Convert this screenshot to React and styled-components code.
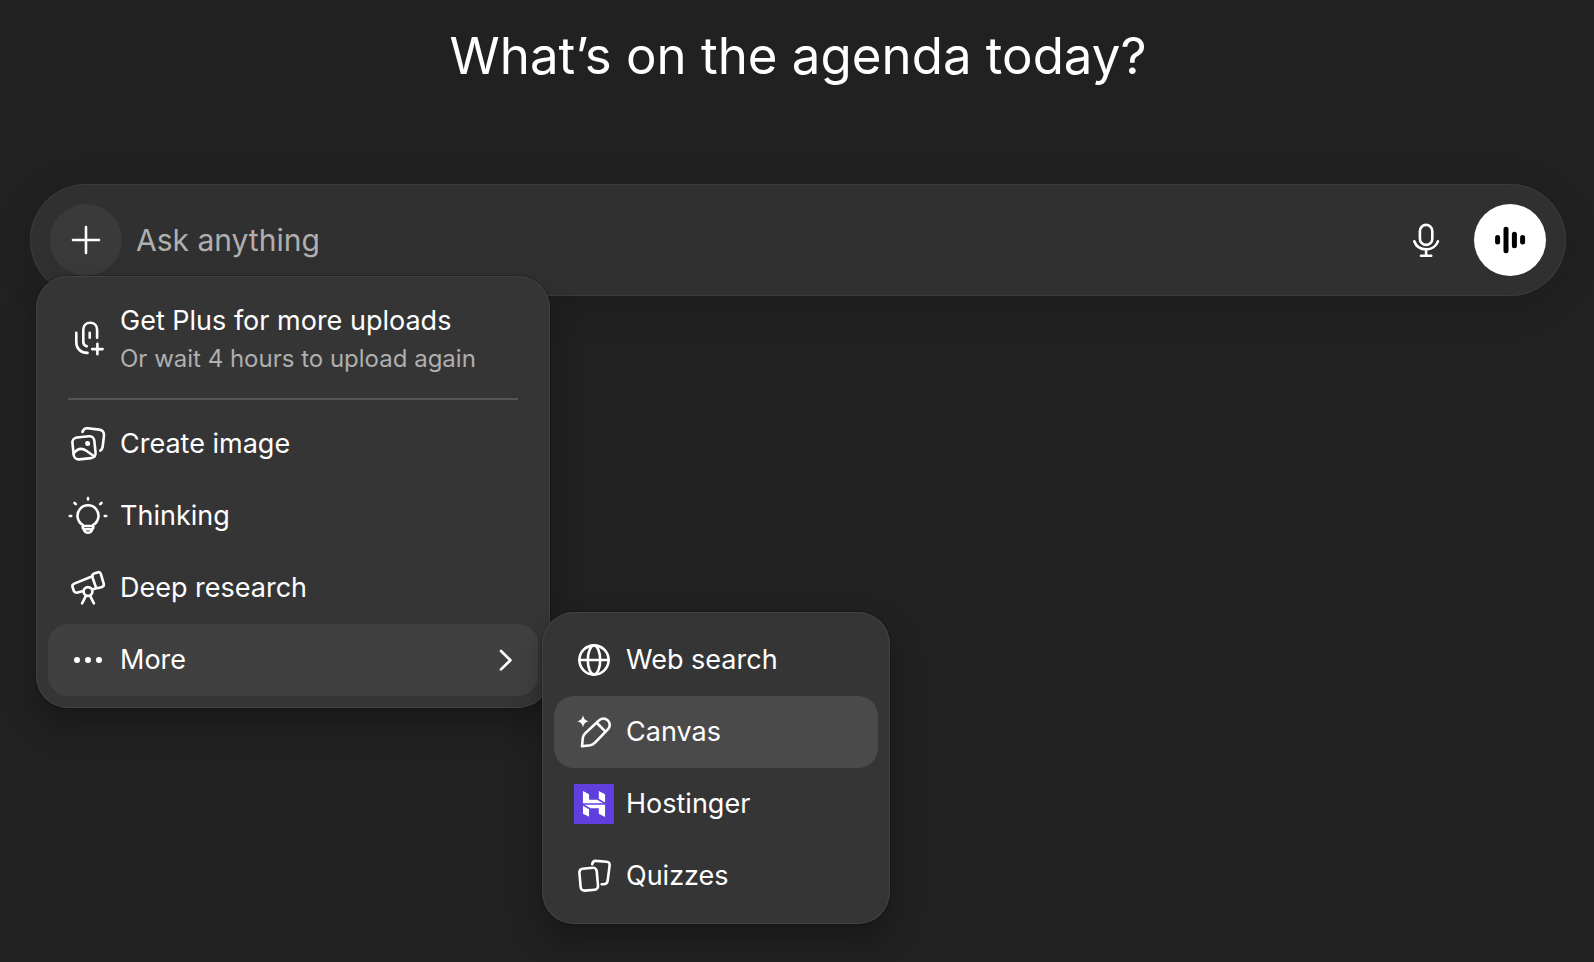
import React from 'react'
import styled, {createGlobalStyle, css} from 'styled-components'
import {SiHostinger} from 'react-icons/si'

const background = '#212121'
const surface = '#303030'
const menuSurface = '#353535'
const outline = '#424242'
const muted = '#afafaf'

const GlobalStyle = createGlobalStyle`
  *, *::before, *::after {
    box-sizing: border-box;
  }
  body {
    margin: 0;
    min-height: 100vh;
    background: ${background};
    color: white;
    font-family: Inter, 'Liberation Sans', sans-serif;
  }
  button, input {
    font: inherit;
    color: inherit;
  }
`

const Page = styled.main`
  padding: 24px 28px 0 30px;
`

const Title = styled.h1`
  margin: 0 0 96px;
  font-size: 51px;
  line-height: 64px;
  font-weight: 400;
  text-align: center;
`

const Composer = styled.form`
  display: flex;
  align-items: center;
  gap: 12px;
  padding: 20px;
  border-radius: 56px;
  background: ${surface};
  box-shadow: inset 0 0 0 1px #3b3b3b, 0 8px 40px rgba(0, 0, 0, 0.12);
`

const RoundButton = styled.button`
  display: flex;
  align-items: center;
  justify-content: center;
  flex: none;
  width: 72px;
  height: 72px;
  padding: 0;
  border: 0;
  border-radius: 50%;
  background: ${p => p.$fill || 'transparent'};
  color: ${p => p.$color || 'white'};
`

const Prompt = styled.input`
  flex: 1;
  min-width: 0;
  height: 48px;
  padding: 0 2px;
  border: 0;
  outline: 0;
  background: transparent;
  font-size: 30px;

  &::placeholder {
    color: ${muted};
    opacity: 1;
  }
`

const MenuAnchor = styled.div`
  position: relative;
  flex: none;
`

const panel = css`
  position: absolute;
  z-index: 1;
  padding: 12px;
  border-radius: 32px;
  background: ${menuSurface};
  box-shadow: inset 0 0 0 1px ${outline}, 0 0 2px rgba(0, 0, 0, 0.6),
    0 16px 32px rgba(0, 0, 0, 0.28);
`

const Menu = styled.div`
  ${panel}
  top: 100%;
  left: -14px;
  width: 514px;
`

const SubMenu = styled.div`
  ${panel}
  top: -12px;
  left: calc(100% + 4px);
  width: 348px;
`

const SubMenuAnchor = styled.div`
  position: relative;
`

const Item = styled.button`
  display: flex;
  align-items: center;
  gap: 12px;
  width: 100%;
  min-height: 72px;
  padding: ${p => (p.$tall ? '13px 20px' : '0 20px')};
  border: 0;
  border-radius: 20px;
  background: ${p => p.$fill || 'transparent'};
  font-size: 27px;
  line-height: 40px;
  text-align: left;
`

const Label = styled.span`
  flex: 1;
  white-space: nowrap;
`

const Hint = styled.small`
  display: block;
  color: ${muted};
  font-size: 24px;
  line-height: 36px;
`

const Divider = styled.hr`
  height: 2px;
  margin: 8px 20px;
  border: 0;
  background: #545454;
`

const Svg = styled.svg`
  display: block;
  flex: none;
  fill: none;
  stroke: currentColor;
  stroke-width: 2.6;
  stroke-linecap: round;
  stroke-linejoin: round;
`

const Logo = styled.span`
  display: flex;
  align-items: center;
  justify-content: center;
  flex: none;
  width: 40px;
  height: 40px;
  background: #613ede;
  font-size: 26px;
`

const Icon = ({children}) => (
  <Svg width="40" height="40" viewBox="0 0 40 40" aria-hidden="true">
    {children}
  </Svg>
)

const PlusIcon = () => (
  <Icon>
    <path d="M20 7v26M7 20h26" />
  </Icon>
)

const MicIcon = () => (
  <Icon>
    <rect x="13.9" y="4.9" width="12.4" height="20" rx="6.2" />
    <path d="M8.3 21.3C10 26.2 14.6 29.4 20.1 29.4S30.3 26.2 31.9 21.3M20.1 29.4v6.3M15 35.7h10.2" />
  </Icon>
)

const VoiceIcon = () => (
  <Icon>
    <path
      d="M7.6 17.5v4.6M16 9.2v21.6M24.4 14.2v11.6M32.6 17.5v4.6"
      strokeWidth="5"
    />
  </Icon>
)

const ClipPlusIcon = () => (
  <Icon>
    <path d="M8.3 13.7v9.5c0 6.6 4.6 10.7 11.2 10.7" />
    <path d="M18.7 27.3c-2.2-.6-3.4-2.1-3.4-4.5V10.7c0-4 2.9-6.9 6.9-6.9s6.9 2.9 6.9 6.9v8.1" />
    <path d="M21.7 13.7v5M29.4 24.9v10.4M24.2 30.1h10.4" />
  </Icon>
)

const ImageIcon = () => (
  <Icon>
    <g transform="rotate(-6 16 23.8)">
      <rect x="5" y="12.8" width="22" height="22" rx="5" />
      <path d="M5 28.5c4.7-5 8.6-5.2 13-1.5l7.5 6.5" />
      <circle cx="20" cy="20" r="2.5" fill="currentColor" stroke="none" />
    </g>
    <path d="M14.4 8c.8-2.6 2.6-4 5.3-3.7l11.5 1.3c3.3.4 5.2 2.7 4.8 6l-1.3 10.9c-.2 1.9-1 3.3-2.5 4.2" />
  </Icon>
)

const BulbIcon = () => (
  <Icon>
    <path d="M14.7 28.8a10.5 10.5 0 1 1 10.6 0M14.7 28.8v2.4c0 1 .4 1.5 1.1 2 .6 2.5 2 3.5 4.2 3.5s3.600-1 4.200-3.500c.7-.5 1.100-1 1.100-2v-2.400M15 30h10M16.500 33.300h7" />
    <path d="M20 2v1.400M1.800 20h1.400M36.800 20h1.400M6.600 7l1.200 1.200M33.400 7l-1.200 1.200" />
  </Icon>
)

const TelescopeIcon = () => (
  <Icon>
    <path d="M24.4 8.2L6.3 15.6c-1.7.7-2.3 2-1.7 3.7l1.2 3.4c.6 1.7 1.9 2.4 3.7 1.9l6-1.7M24.3 21.4l4-1.2" />
    <path d="M26 5.6l3.5-1.2c1.7-.6 2.9 0 3.4 1.8l2.8 9.5c.5 1.7-.1 2.7-1.8 3.2l-3.2 1c-1.6.5-2.7-.1-3.2-1.7l-3-8.7c-.6-1.900-.1-3.300 1.500-3.900z" />
    <circle cx="20" cy="23.5" r="4.4" />
    <path d="M18 27.6l-3.900 7.800M22 27.600l3.900 7.800" />
  </Icon>
)

const DotsIcon = () => (
  <Icon>
    <path d="M9 20h0M20 20h0M31 20h0" strokeWidth="6" />
  </Icon>
)

const GlobeIcon = () => (
  <Icon>
    <circle cx="20" cy="20" r="14.6" />
    <ellipse cx="20" cy="20" rx="6.2" ry="14.6" />
    <path d="M5.4 20h29.200" />
  </Icon>
)

const CanvasIcon = () => (
  <Icon>
    <path d="M24.6 8.7c3-3 6.600-2.800 9.200-.3 2.600 2.600 2.700 6.300-.2 9.200L21 30.600c-1.500 1.500-2.600 2.200-4.700 2.600l-8.300 1.100.8-8.300c.2-2 .9-3.200 2.300-4.600zM23.400 11.500l7.300 7.300" />
    <path
      d="M9 3.200c1 4 2.200 5.200 6.100 6.100-3.900.9-5.100 2.100-6.100 6.100-1-4-2.200-5.200-6.100-6.100 3.900-.9 5.100-2.100 6.100-6.100z"
      fill="currentColor"
      stroke="none"
    />
  </Icon>
)

const CardsIcon = () => (
  <Icon>
    <rect
      x="6"
      y="12.2"
      width="17.4"
      height="22"
      rx="3.6"
      transform="rotate(-5 14.7 23.2)"
    />
    <path d="M18.2 8.200c.4-2.400 1.700-3.600 4.200-3.300l10.100.9c2.400.2 3.400 1.500 3.100 3.900l-1.900 14.700c-.3 2.700-1.600 3.900-4.200 3.900h-1.800" />
  </Icon>
)

const ChevronIcon = () => (
  <Svg width="24" height="24" viewBox="0 0 24 24" aria-hidden="true">
    <path d="M7 3l9.400 9.200L7 21.400" strokeWidth="2.7" />
  </Svg>
)

const MenuItem = ({icon, children, ...rest}) => (
  <Item type="button" role="menuitem" {...rest}>
    {icon}
    {children}
  </Item>
)

const MoreMenu = () => (
  <SubMenuAnchor>
    <MenuItem icon={<DotsIcon />} $fill="#404040" aria-haspopup="menu" aria-expanded>
      <Label>More</Label>
      <ChevronIcon />
    </MenuItem>
    <SubMenu role="menu" aria-label="More">
      <MenuItem icon={<GlobeIcon />}>
        <Label>Web search</Label>
      </MenuItem>
      <MenuItem icon={<CanvasIcon />} $fill="#4a4a4a">
        <Label>Canvas</Label>
      </MenuItem>
      <MenuItem
        icon={
          <Logo>
            <SiHostinger />
          </Logo>
        }
      >
        <Label>Hostinger</Label>
      </MenuItem>
      <MenuItem icon={<CardsIcon />}>
        <Label>Quizzes</Label>
      </MenuItem>
    </SubMenu>
  </SubMenuAnchor>
)

const ToolsMenu = () => (
  <Menu role="menu" aria-label="Tools">
    <MenuItem icon={<ClipPlusIcon />} $tall>
      <Label>
        Get Plus for more uploads
        <Hint>Or wait 4 hours to upload again</Hint>
      </Label>
    </MenuItem>
    <Divider />
    <MenuItem icon={<ImageIcon />}>
      <Label>Create image</Label>
    </MenuItem>
    <MenuItem icon={<BulbIcon />}>
      <Label>Thinking</Label>
    </MenuItem>
    <MenuItem icon={<TelescopeIcon />}>
      <Label>Deep research</Label>
    </MenuItem>
    <MoreMenu />
  </Menu>
)

export default function App() {
  return (
    <Page>
      <GlobalStyle />
      <Title>What’s on the agenda today?</Title>
      <Composer onSubmit={e => e.preventDefault()}>
        <MenuAnchor>
          <RoundButton type="button" $fill="#3a3a3a" aria-label="Add files and more">
            <PlusIcon />
          </RoundButton>
          <ToolsMenu />
        </MenuAnchor>
        <Prompt type="text" placeholder="Ask anything" aria-label="Ask anything" />
        <RoundButton type="button" aria-label="Dictate">
          <MicIcon />
        </RoundButton>
        <RoundButton type="button" $fill="white" $color="black" aria-label="Use voice">
          <VoiceIcon />
        </RoundButton>
      </Composer>
    </Page>
  )
}
